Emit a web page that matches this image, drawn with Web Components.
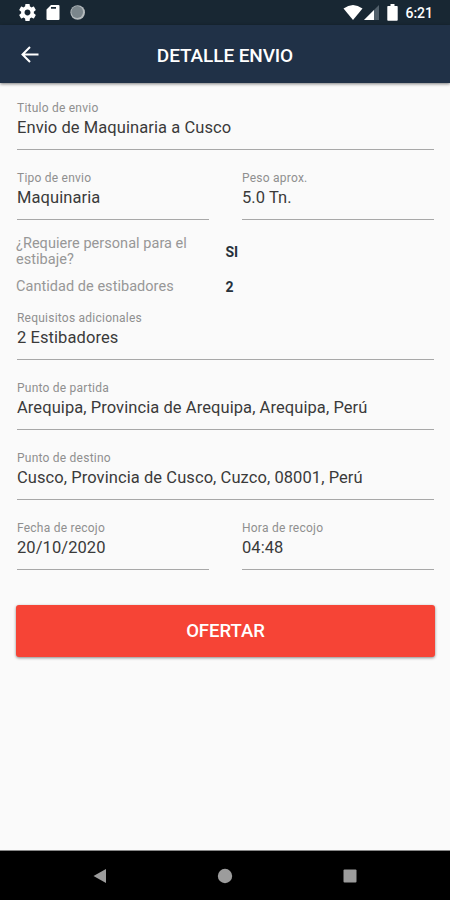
<!DOCTYPE html>
<html lang="es">
<head>
<meta charset="utf-8">
<title>Detalle envio</title>
<style>
html, body {
  margin: 0;
  height: 100%;
}
body {
  font-family: Roboto, "Noto Sans", sans-serif;
}
</style>
</head>
<body>
<shipment-screen></shipment-screen>

<script>
const define = (name, html) => {
  const template = document.createElement("template");
  template.innerHTML = html;
  customElements.define(name, class extends HTMLElement {
    constructor() {
      super();
      this.attachShadow({ mode: "open" });
      this.shadowRoot.appendChild(template.content.cloneNode(true));
    }
  });
};

define("status-bar", `\
<style>
:host {
  display: flex;
  justify-content: space-between;
  height: 25px;
  padding: 0 17px 0 19px;
  box-sizing: border-box;
  background: #182733;
  color: #fff;
}
div { display: flex; align-items: center; }
.left { gap: 10px; }
svg { display: block; fill: #fff; }
.wifi { margin-right: 1px; }
.battery { margin: 0 7px 0 8px; }
time { font-size: 14px; font-weight: 500; line-height: 25px; padding-top: 1px; }
</style>
<div class="left">
  <svg width="17" height="17" viewBox="2 2 20 20"><path d="M19.43 12.98c.04-.32.07-.64.07-.98s-.03-.66-.07-.98l2.11-1.65c.19-.15.24-.42.12-.64l-2-3.46c-.12-.22-.39-.3-.61-.22l-2.49 1c-.52-.4-1.08-.73-1.69-.98l-.38-2.65C14.46 2.18 14.25 2 14 2h-4c-.25 0-.46.18-.49.42l-.38 2.65c-.61.25-1.17.59-1.69.98l-2.49-1c-.23-.09-.49 0-.61.22l-2 3.46c-.13.22-.07.49.12.64l2.11 1.65c-.04.32-.07.65-.07.98s.03.66.07.98l-2.11 1.65c-.19.15-.24.42-.12.64l2 3.46c.12.22.39.3.61.22l2.49-1c.52.4 1.08.73 1.69.98l.38 2.65c.03.24.24.42.49.42h4c.25 0 .46-.18.49-.42l.38-2.65c.61-.25 1.17-.59 1.69-.98l2.49 1c.23.09.49 0 .61-.22l2-3.46c.12-.22.07-.49-.12-.64l-2.11-1.65zM12 15.5c-1.93 0-3.500-1.570-3.500-3.500s1.570-3.500 3.500-3.500 3.500 1.570 3.500 3.500-1.570 3.500-3.500 3.500z"/></svg>
  <svg width="14" height="17" viewBox="0 0 14 17"><path fill-rule="evenodd" d="M5 1h7.500q1 0 1 1v13q0 1-1 1h-11q-1 0-1-1V5.500zM5 3v1.800h5V3z"/></svg>
  <svg width="17" height="17" viewBox="0 0 17 17"><circle cx="7.700" cy="8.500" r="7.300" fill="#b4babd"/><circle cx="7.200" cy="8" r="5.900" fill="#7b868c"/></svg>
</div>
<div class="right">
  <svg class="wifi" width="20" height="17" viewBox="0 0 20 17"><path d="M0.500 4.500Q10-2.500 19.500 4.500L10 16z"/></svg>
  <svg width="15" height="17" viewBox="0 0 15 17"><path d="M15 1v15H0z" fill="#52606b"/><path d="M10 6v10H0z"/></svg>
  <svg class="battery" width="11" height="17" viewBox="0 0 11 17"><path d="M3.500 0h4v2H10q.7 0 .7.800v13.200q0 .8-.8.800H1.100q-.8 0-.8-.8V2.800Q.3 2 1 2h2.500z"/></svg>
  <time>6:21</time>
</div>
`);

define("app-bar", `\
<style>
:host {
  display: grid;
  grid-template-columns: 60px 1fr 60px;
  align-items: center;
  height: 58px;
  background: #203147;
  color: #fff;
  box-shadow: 0 1px 3px rgba(0, 0, 0, .5);
  position: relative;
}
svg { display: block; justify-self: center; }
h1 {
  margin: 0;
  padding-top: 2px;
  text-align: center;
  font-size: 19px;
  font-weight: 500;
  letter-spacing: -.1px;
}
</style>
<svg width="20" height="20" viewBox="0 0 20 20" fill="none" stroke="#fff" stroke-width="2"><path d="M18.500 10.500H3M10 3L2.500 10.500L10 18"/></svg>
<h1><slot></slot></h1>
`);

define("form-field", `\
<style>
:host {
  display: block;
  height: 48px;
  border-bottom: 1px solid #a8a8a8;
}
.label {
  font-size: 12px;
  line-height: 15px;
  letter-spacing: .23px;
  color: #8f8f8f;
}
.value {
  padding-top: 1px;
  font-size: 16.500px;
  line-height: 22px;
  letter-spacing: .075px;
  color: #3a3a3a;
  white-space: nowrap;
}
</style>
<div class="label"><slot name="label"></slot></div>
<div class="value"><slot></slot></div>
`);

define("field-row", `\
<style>
:host {
  display: grid;
  grid-auto-flow: column;
  grid-auto-columns: 1fr;
  gap: 33px;
  padding: 0 16px 0 17px;
}
</style>
<slot></slot>
`);

define("info-row", `\
<style>
:host {
  display: grid;
  grid-template-columns: 209.500px 1fr;
  align-items: center;
  padding: 0 16px;
  font-size: 14.500px;
  line-height: 16px;
  color: #979797;
}
.question { padding-right: 30px; letter-spacing: .04px; }
.answer { font-size: 14px; font-weight: 700; color: #26313b; }
</style>
<div class="question"><slot name="label"></slot></div>
<div class="answer"><slot></slot></div>
`);

define("raised-button", `\
<style>
:host { display: block; }
button {
  display: block;
  width: 100%;
  height: 52px;
  border: 0;
  border-radius: 3px;
  background: #f64436;
  color: #fff;
  font: 500 18.500px Roboto, sans-serif;
  box-shadow: 0 1px 3px rgba(0, 0, 0, .45);
}
</style>
<button><slot></slot></button>
`);

define("nav-bar", `\
<style>
:host {
  display: flex;
  justify-content: center;
  align-items: center;
  gap: 109px;
  height: 50px;
  box-sizing: border-box;
  border-top: 1px solid #888;
  background: #000;
}
svg { display: block; fill: #9c9c9c; }
</style>
<svg width="16" height="16" viewBox="0 0 16 16"><path d="M1.500 8L14 1v14z"/></svg>
<svg width="16" height="16" viewBox="0 0 16 16"><circle cx="8" cy="8" r="7.200"/></svg>
<svg width="16" height="16" viewBox="0 0 16 16"><rect x="1.500" y="1.500" width="13" height="13" rx="1"/></svg>
`);

define("shipment-screen", `\
<style>
:host {
  display: flex;
  flex-direction: column;
  width: 450px;
  height: 900px;
  background: #fafafa;
}
main {
  flex: 1;
  display: flex;
  flex-direction: column;
  padding-top: 18px;
}
.fields { display: grid; gap: 21px; }
.info { display: grid; gap: 11px; padding: 16px 0 16px; }
raised-button { margin: 35px 15px 0 16px; }
</style>
<status-bar></status-bar>
<app-bar>DETALLE ENVIO</app-bar>
<main>
  <div class="fields">
    <field-row>
      <form-field><span slot="label">Titulo de envio</span>Envio de Maquinaria a Cusco</form-field>
    </field-row>
    <field-row>
      <form-field><span slot="label">Tipo de envio</span>Maquinaria</form-field>
      <form-field><span slot="label">Peso aprox.</span>5.0 Tn.</form-field>
    </field-row>
  </div>
  <div class="info">
    <info-row><span slot="label">¿Requiere personal para el estibaje?</span>SI</info-row>
    <info-row><span slot="label">Cantidad de estibadores</span>2</info-row>
  </div>
  <div class="fields">
    <field-row>
      <form-field><span slot="label">Requisitos adicionales</span>2 Estibadores</form-field>
    </field-row>
    <field-row>
      <form-field><span slot="label">Punto de partida</span>Arequipa, Provincia de Arequipa, Arequipa, Perú</form-field>
    </field-row>
    <field-row>
      <form-field><span slot="label">Punto de destino</span>Cusco, Provincia de Cusco, Cuzco, 08001, Perú</form-field>
    </field-row>
    <field-row>
      <form-field><span slot="label">Fecha de recojo</span>20/10/2020</form-field>
      <form-field><span slot="label">Hora de recojo</span>04:48</form-field>
    </field-row>
  </div>
  <raised-button>OFERTAR</raised-button>
</main>
<nav-bar></nav-bar>
`);
</script>
</body>
</html>
